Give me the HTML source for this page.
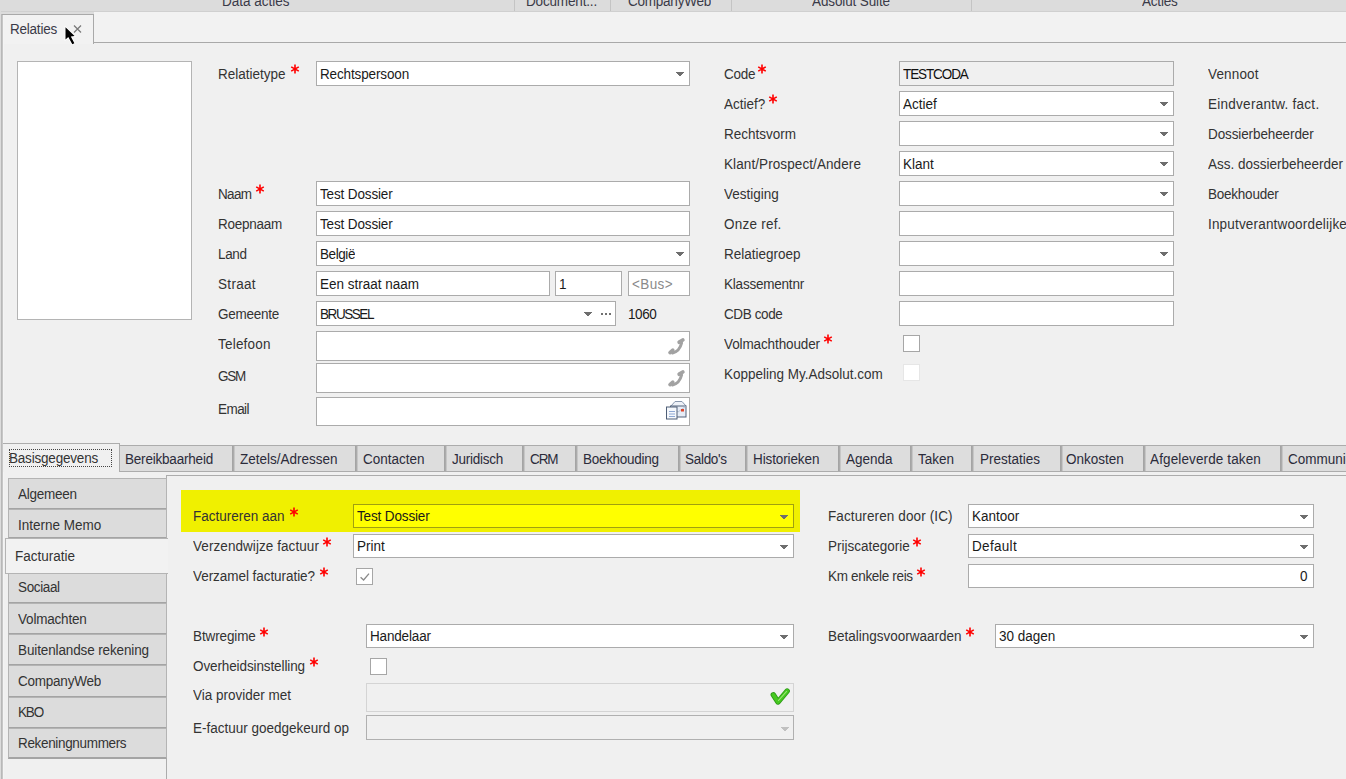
<!DOCTYPE html>
<html><head><meta charset="utf-8">
<style>
*{box-sizing:border-box}
html,body{margin:0;padding:0}
body{width:1346px;height:779px;overflow:hidden;position:relative;background:#f0f0f0;font-family:"Liberation Sans",sans-serif;font-size:13.5px;color:#333}
.a{position:absolute}
.t{position:absolute;white-space:nowrap;line-height:16px;height:16px;transform:scaleY(1.1);transform-origin:0 13px}
</style></head><body>
<div class="a" style="left:0px;top:0px;width:1346px;height:11px;background:#dcdcdc"></div>
<div class="a" style="left:0px;top:11px;width:1346px;height:1px;background:#d0d0d0"></div>
<div class="a" style="left:0px;top:12px;width:1346px;height:31px;background:#f2f2f2"></div>
<div class="a" style="left:0px;top:12px;width:94px;height:2px;background:#dcdcdc"></div>
<div class="a" style="left:0px;top:0px;width:1px;height:779px;background:#dcdcdc"></div>
<div class="a" style="left:514px;top:0px;width:1px;height:11px;background:#c4c4c4"></div>
<div class="a" style="left:610px;top:0px;width:1px;height:11px;background:#c4c4c4"></div>
<div class="a" style="left:731px;top:0px;width:1px;height:11px;background:#c4c4c4"></div>
<div class="a" style="left:971px;top:0px;width:1px;height:11px;background:#c4c4c4"></div>
<div class="t" style="left:222px;top:-6px;color:#3a3a48">Data acties</div>
<div class="t" style="left:526px;top:-6px;color:#3a3a48;letter-spacing:-0.162px">Document...</div>
<div class="t" style="left:628px;top:-6px;color:#3a3a48;letter-spacing:-0.230px">CompanyWeb</div>
<div class="t" style="left:812px;top:-6px;color:#3a3a48;letter-spacing:-0.120px">Adsolut Suite</div>
<div class="t" style="left:1142px;top:-6px;color:#3a3a48;letter-spacing:-0.194px">Acties</div>
<div class="a" style="left:92px;top:42px;width:1254px;height:1px;background:#a9a9a9"></div>
<div class="a" style="left:1px;top:14px;width:93px;height:30px;background:#f2f2f2;border:1px solid #a9a9a9;border-bottom:none;border-left:none"></div>
<div class="a" style="left:1px;top:14px;width:1px;height:765px;background:#b8b8b8"></div>
<div class="a" style="left:2px;top:15px;width:1px;height:764px;background:#c6c6c6"></div>
<div class="a" style="left:3px;top:15px;width:1px;height:764px;background:#f4f4f4"></div>
<div class="t" style="left:10px;top:22px;color:#3a3a48;letter-spacing:-0.223px">Relaties</div>
<svg class="a" style="left:70px;top:20px" width="16" height="16"><path d="M4 5.5L11 12.5M11 5.5L4 12.5" stroke="#7a7a7a" stroke-width="1.3"/></svg>
<svg class="a" style="left:60.5px;top:24px" width="20" height="24"><path d="M4.5 3.3V15.5L7.3 13L11.3 20.2L13.4 19.2L9.8 12.4L13.6 12.1Z" fill="#000" stroke="#fff" stroke-width="1.6" paint-order="stroke" stroke-linejoin="miter"/></svg>
<div class="a" style="left:17px;top:61px;width:175px;height:259px;background:#fff;border:1px solid #b4b4b4"></div>
<div class="t" style="left:218px;top:67px">Relatietype</div>
<svg class="a" style="left:290px;top:64px" width="10" height="10"><path d="M5 0.6V9.4M1.2 2.9L8.8 7.1M1.2 7.1L8.8 2.9" stroke="#f00" stroke-width="1.6"/></svg>
<div class="a" style="left:316px;top:61px;width:374px;height:25px;background:#fff;border:1px solid #ababab"></div>
<div class="t" style="left:320px;top:67px;color:#1a1a1a;letter-spacing:-0.139px">Rechtspersoon</div>
<svg class="a" style="left:676px;top:72px" width="8" height="4"><path d="M0 0H8V1H7V2H6V3H5V4H3V3H2V2H1V1H0Z" fill="#6e6e6e"/></svg>
<div class="t" style="left:218px;top:187px;letter-spacing:-0.679px">Naam</div>
<svg class="a" style="left:255px;top:184px" width="10" height="10"><path d="M5 0.6V9.4M1.2 2.9L8.8 7.1M1.2 7.1L8.8 2.9" stroke="#f00" stroke-width="1.6"/></svg>
<div class="a" style="left:316px;top:181px;width:374px;height:25px;background:#fff;border:1px solid #ababab"></div>
<div class="t" style="left:320px;top:187px;color:#1a1a1a;letter-spacing:-0.140px">Test Dossier</div>
<div class="t" style="left:218px;top:217px;letter-spacing:-0.268px">Roepnaam</div>
<div class="a" style="left:316px;top:211px;width:374px;height:25px;background:#fff;border:1px solid #ababab"></div>
<div class="t" style="left:320px;top:217px;color:#1a1a1a;letter-spacing:-0.140px">Test Dossier</div>
<div class="t" style="left:218px;top:247px;letter-spacing:-0.362px">Land</div>
<div class="a" style="left:316px;top:241px;width:374px;height:25px;background:#fff;border:1px solid #ababab"></div>
<div class="t" style="left:320px;top:247px;color:#1a1a1a;letter-spacing:-0.422px">België</div>
<svg class="a" style="left:676px;top:252px" width="8" height="4"><path d="M0 0H8V1H7V2H6V3H5V4H3V3H2V2H1V1H0Z" fill="#6e6e6e"/></svg>
<div class="t" style="left:218px;top:277px;letter-spacing:0.311px">Straat</div>
<div class="a" style="left:316px;top:271px;width:234px;height:25px;background:#fff;border:1px solid #ababab"></div>
<div class="t" style="left:320px;top:277px;color:#1a1a1a">Een straat naam</div>
<div class="a" style="left:555px;top:271px;width:67px;height:25px;background:#fff;border:1px solid #ababab"></div>
<div class="t" style="left:559px;top:277px;color:#1a1a1a">1</div>
<div class="a" style="left:628px;top:271px;width:62px;height:25px;background:#fff;border:1px solid #ababab"></div>
<div class="t" style="left:632px;top:277px;color:#8a8a8a;letter-spacing:0.374px">&lt;Bus&gt;</div>
<div class="t" style="left:218px;top:307px;letter-spacing:-0.268px">Gemeente</div>
<div class="a" style="left:316px;top:301px;width:300px;height:25px;background:#fff;border:1px solid #ababab"></div>
<div class="t" style="left:320px;top:307px;color:#1a1a1a;letter-spacing:-1.433px">BRUSSEL</div>
<svg class="a" style="left:584px;top:312px" width="8" height="4"><path d="M0 0H8V1H7V2H6V3H5V4H3V3H2V2H1V1H0Z" fill="#6e6e6e"/></svg>
<div class="a" style="left:601px;top:313px;width:2px;height:2px;background:#707070"></div>
<div class="a" style="left:605px;top:313px;width:2px;height:2px;background:#707070"></div>
<div class="a" style="left:609px;top:313px;width:2px;height:2px;background:#707070"></div>
<div class="t" style="left:628px;top:307px;color:#1a1a1a;letter-spacing:-0.387px">1060</div>
<div class="t" style="left:218px;top:337px;letter-spacing:0.207px">Telefoon</div>
<div class="a" style="left:316px;top:331px;width:374px;height:30px;background:#fff;border:1px solid #ababab"></div>
<div class="t" style="left:218px;top:369px;letter-spacing:-1.255px">GSM</div>
<div class="a" style="left:316px;top:363px;width:374px;height:30px;background:#fff;border:1px solid #ababab"></div>
<div class="t" style="left:218px;top:402px;letter-spacing:-0.553px">Email</div>
<div class="a" style="left:316px;top:397px;width:374px;height:29px;background:#fff;border:1px solid #ababab"></div>
<svg class="a" style="left:664px;top:334px" width="24" height="24"><g fill="none" stroke="#a2a2a2" stroke-linecap="round"><path d="M8.5 19Q15.5 17.5 17.6 9" stroke-width="3"/><path d="M6 18.6L8.8 16.2" stroke-width="3.6"/><path d="M15.2 8.2L18.8 6" stroke-width="3.8"/></g></svg>
<svg class="a" style="left:664px;top:366px" width="24" height="24"><g fill="none" stroke="#a2a2a2" stroke-linecap="round"><path d="M8.5 19Q15.5 17.5 17.6 9" stroke-width="3"/><path d="M6 18.6L8.8 16.2" stroke-width="3.6"/><path d="M15.2 8.2L18.8 6" stroke-width="3.8"/></g></svg>
<svg class="a" style="left:664px;top:399px" width="24" height="24">
<path d="M7 7L11 2.5H18L22 7" fill="#eef2f8" stroke="#8796ad" stroke-width="1"/>
<rect x="6.5" y="7" width="15.5" height="11" fill="#e6ecf6" stroke="#52627a" stroke-width="1"/>
<path d="M7 7.5L14 13L21.5 7.5" fill="none" stroke="#b8c4d6" stroke-width="1"/>
<rect x="17" y="10" width="3" height="2.5" fill="#e0452a"/>
<rect x="2.5" y="8" width="10.5" height="12" fill="#f5f8fc" stroke="#4e5e76" stroke-width="1"/>
<path d="M5 12.5H11M5 15H11M5 17.5H11" stroke="#8ea8d4" stroke-width="1"/>
</svg>
<div class="t" style="left:724px;top:67px;letter-spacing:-0.270px">Code</div>
<svg class="a" style="left:757px;top:64px" width="10" height="10"><path d="M5 0.6V9.4M1.2 2.9L8.8 7.1M1.2 7.1L8.8 2.9" stroke="#f00" stroke-width="1.6"/></svg>
<div class="a" style="left:899px;top:61px;width:275px;height:25px;background:#f0f0f0;border:1px solid #ababab"></div>
<div class="t" style="left:903px;top:67px;color:#111;letter-spacing:-1.102px">TESTCODA</div>
<div class="t" style="left:724px;top:97px">Actief?</div>
<svg class="a" style="left:767.5px;top:94px" width="10" height="10"><path d="M5 0.6V9.4M1.2 2.9L8.8 7.1M1.2 7.1L8.8 2.9" stroke="#f00" stroke-width="1.6"/></svg>
<div class="a" style="left:899px;top:91px;width:275px;height:25px;background:#fff;border:1px solid #ababab"></div>
<div class="t" style="left:903px;top:97px;color:#1a1a1a">Actief</div>
<svg class="a" style="left:1160px;top:102px" width="8" height="4"><path d="M0 0H8V1H7V2H6V3H5V4H3V3H2V2H1V1H0Z" fill="#6e6e6e"/></svg>
<div class="t" style="left:724px;top:127px">Rechtsvorm</div>
<div class="a" style="left:899px;top:121px;width:275px;height:25px;background:#fff;border:1px solid #ababab"></div>
<svg class="a" style="left:1160px;top:132px" width="8" height="4"><path d="M0 0H8V1H7V2H6V3H5V4H3V3H2V2H1V1H0Z" fill="#6e6e6e"/></svg>
<div class="t" style="left:724px;top:157px;letter-spacing:0.091px">Klant/Prospect/Andere</div>
<div class="a" style="left:899px;top:151px;width:275px;height:25px;background:#fff;border:1px solid #ababab"></div>
<div class="t" style="left:903px;top:157px;color:#1a1a1a">Klant</div>
<svg class="a" style="left:1160px;top:162px" width="8" height="4"><path d="M0 0H8V1H7V2H6V3H5V4H3V3H2V2H1V1H0Z" fill="#6e6e6e"/></svg>
<div class="t" style="left:724px;top:187px">Vestiging</div>
<div class="a" style="left:899px;top:181px;width:275px;height:25px;background:#fff;border:1px solid #ababab"></div>
<svg class="a" style="left:1160px;top:192px" width="8" height="4"><path d="M0 0H8V1H7V2H6V3H5V4H3V3H2V2H1V1H0Z" fill="#6e6e6e"/></svg>
<div class="t" style="left:724px;top:217px;letter-spacing:0.230px">Onze ref.</div>
<div class="a" style="left:899px;top:211px;width:275px;height:25px;background:#fff;border:1px solid #ababab"></div>
<div class="t" style="left:724px;top:247px">Relatiegroep</div>
<div class="a" style="left:899px;top:241px;width:275px;height:25px;background:#fff;border:1px solid #ababab"></div>
<svg class="a" style="left:1160px;top:252px" width="8" height="4"><path d="M0 0H8V1H7V2H6V3H5V4H3V3H2V2H1V1H0Z" fill="#6e6e6e"/></svg>
<div class="t" style="left:724px;top:277px;letter-spacing:-0.212px">Klassementnr</div>
<div class="a" style="left:899px;top:271px;width:275px;height:25px;background:#fff;border:1px solid #ababab"></div>
<div class="t" style="left:724px;top:307px;letter-spacing:-0.379px">CDB code</div>
<div class="a" style="left:899px;top:301px;width:275px;height:25px;background:#fff;border:1px solid #ababab"></div>
<div class="t" style="left:724px;top:337px;letter-spacing:-0.113px">Volmachthouder</div>
<svg class="a" style="left:823px;top:334px" width="10" height="10"><path d="M5 0.6V9.4M1.2 2.9L8.8 7.1M1.2 7.1L8.8 2.9" stroke="#f00" stroke-width="1.6"/></svg>
<div class="a" style="left:903px;top:335px;width:17px;height:17px;background:#fff;border:1px solid #a6a6a6"></div>
<div class="t" style="left:724px;top:367px">Koppeling My.Adsolut.com</div>
<div class="a" style="left:903px;top:364px;width:17px;height:17px;background:#ffffff;border:1px solid #e6e6e6"></div>
<div class="t" style="left:1208px;top:67px;letter-spacing:0.148px">Vennoot</div>
<div class="t" style="left:1208px;top:97px;letter-spacing:0.269px">Eindverantw. fact.</div>
<div class="t" style="left:1208px;top:127px;letter-spacing:-0.107px">Dossierbeheerder</div>
<div class="t" style="left:1208px;top:157px">Ass. dossierbeheerder</div>
<div class="t" style="left:1208px;top:187px;letter-spacing:-0.231px">Boekhouder</div>
<div class="t" style="left:1208px;top:217px;letter-spacing:0.178px">Inputverantwoordelijke</div>
<div class="a" style="left:120px;top:471px;width:1226px;height:1px;background:#acacac"></div>
<div class="a" style="left:119px;top:445px;width:1300px;height:27px;background:#dddddd;border:1px solid #acacac;border-left:none"></div>
<div class="t" style="left:125px;top:452px;color:#2b2b3a;letter-spacing:-0.201px">Bereikbaarheid</div>
<div class="a" style="left:232px;top:446px;width:1px;height:25px;background:#a4a4a4"></div>
<div class="a" style="left:233px;top:446px;width:1px;height:25px;background:#ababab"></div>
<div class="a" style="left:234px;top:446px;width:1px;height:25px;background:#c6c6c6"></div>
<div class="t" style="left:240px;top:452px;color:#2b2b3a">Zetels/Adressen</div>
<div class="a" style="left:355px;top:446px;width:1px;height:25px;background:#a4a4a4"></div>
<div class="a" style="left:356px;top:446px;width:1px;height:25px;background:#ababab"></div>
<div class="a" style="left:357px;top:446px;width:1px;height:25px;background:#c6c6c6"></div>
<div class="t" style="left:363px;top:452px;color:#2b2b3a">Contacten</div>
<div class="a" style="left:444px;top:446px;width:1px;height:25px;background:#a4a4a4"></div>
<div class="a" style="left:445px;top:446px;width:1px;height:25px;background:#ababab"></div>
<div class="a" style="left:446px;top:446px;width:1px;height:25px;background:#c6c6c6"></div>
<div class="t" style="left:452px;top:452px;color:#2b2b3a;letter-spacing:-0.253px">Juridisch</div>
<div class="a" style="left:522px;top:446px;width:1px;height:25px;background:#a4a4a4"></div>
<div class="a" style="left:523px;top:446px;width:1px;height:25px;background:#ababab"></div>
<div class="a" style="left:524px;top:446px;width:1px;height:25px;background:#c6c6c6"></div>
<div class="t" style="left:530px;top:452px;color:#2b2b3a;letter-spacing:-1.083px">CRM</div>
<div class="a" style="left:575px;top:446px;width:1px;height:25px;background:#a4a4a4"></div>
<div class="a" style="left:576px;top:446px;width:1px;height:25px;background:#ababab"></div>
<div class="a" style="left:577px;top:446px;width:1px;height:25px;background:#c6c6c6"></div>
<div class="t" style="left:583px;top:452px;color:#2b2b3a;letter-spacing:-0.293px">Boekhouding</div>
<div class="a" style="left:678px;top:446px;width:1px;height:25px;background:#a4a4a4"></div>
<div class="a" style="left:679px;top:446px;width:1px;height:25px;background:#ababab"></div>
<div class="a" style="left:680px;top:446px;width:1px;height:25px;background:#c6c6c6"></div>
<div class="t" style="left:685px;top:452px;color:#2b2b3a;letter-spacing:-0.294px">Saldo's</div>
<div class="a" style="left:745px;top:446px;width:1px;height:25px;background:#a4a4a4"></div>
<div class="a" style="left:746px;top:446px;width:1px;height:25px;background:#ababab"></div>
<div class="a" style="left:747px;top:446px;width:1px;height:25px;background:#c6c6c6"></div>
<div class="t" style="left:753px;top:452px;color:#2b2b3a;letter-spacing:-0.112px">Historieken</div>
<div class="a" style="left:838px;top:446px;width:1px;height:25px;background:#a4a4a4"></div>
<div class="a" style="left:839px;top:446px;width:1px;height:25px;background:#ababab"></div>
<div class="a" style="left:840px;top:446px;width:1px;height:25px;background:#c6c6c6"></div>
<div class="t" style="left:846px;top:452px;color:#2b2b3a">Agenda</div>
<div class="a" style="left:910px;top:446px;width:1px;height:25px;background:#a4a4a4"></div>
<div class="a" style="left:911px;top:446px;width:1px;height:25px;background:#ababab"></div>
<div class="a" style="left:912px;top:446px;width:1px;height:25px;background:#c6c6c6"></div>
<div class="t" style="left:918px;top:452px;color:#2b2b3a">Taken</div>
<div class="a" style="left:971px;top:446px;width:1px;height:25px;background:#a4a4a4"></div>
<div class="a" style="left:972px;top:446px;width:1px;height:25px;background:#ababab"></div>
<div class="a" style="left:973px;top:446px;width:1px;height:25px;background:#c6c6c6"></div>
<div class="t" style="left:980px;top:452px;color:#2b2b3a">Prestaties</div>
<div class="a" style="left:1060px;top:446px;width:1px;height:25px;background:#a4a4a4"></div>
<div class="a" style="left:1061px;top:446px;width:1px;height:25px;background:#ababab"></div>
<div class="a" style="left:1062px;top:446px;width:1px;height:25px;background:#c6c6c6"></div>
<div class="t" style="left:1066px;top:452px;color:#2b2b3a">Onkosten</div>
<div class="a" style="left:1143px;top:446px;width:1px;height:25px;background:#a4a4a4"></div>
<div class="a" style="left:1144px;top:446px;width:1px;height:25px;background:#ababab"></div>
<div class="a" style="left:1145px;top:446px;width:1px;height:25px;background:#c6c6c6"></div>
<div class="t" style="left:1150px;top:452px;color:#2b2b3a;letter-spacing:0.128px">Afgeleverde taken</div>
<div class="a" style="left:1280px;top:446px;width:1px;height:25px;background:#a4a4a4"></div>
<div class="a" style="left:1281px;top:446px;width:1px;height:25px;background:#ababab"></div>
<div class="a" style="left:1282px;top:446px;width:1px;height:25px;background:#c6c6c6"></div>
<div class="t" style="left:1288px;top:452px;color:#2b2b3a">Communicatie</div>
<div class="a" style="left:3px;top:443px;width:117px;height:29px;background:#f0f0f0;border:1px solid #acacac;border-bottom:none;border-left:none"></div>
<div class="a" style="left:9px;top:449px;width:103px;height:18px;border:1px dotted #444"></div>
<div class="t" style="left:9px;top:451px;letter-spacing:-0.197px">Basisgegevens</div>
<div class="a" style="left:166px;top:475px;width:1180px;height:304px;background:#f0f0f0;border-top:1px solid #acacac;border-left:1px solid #acacac"></div>
<div class="a" style="left:8px;top:478px;width:159px;height:32px;background:#dcdcdc;border:1px solid #b4b4b4;border-bottom:2px solid #a4a4a4"></div>
<div class="a" style="left:8px;top:509px;width:159px;height:30px;background:#dcdcdc;border:1px solid #b4b4b4;border-bottom:2px solid #a4a4a4"></div>
<div class="a" style="left:8px;top:573px;width:159px;height:31px;background:#dcdcdc;border:1px solid #b4b4b4;border-bottom:2px solid #a4a4a4"></div>
<div class="a" style="left:8px;top:603px;width:159px;height:32px;background:#dcdcdc;border:1px solid #b4b4b4;border-bottom:2px solid #a4a4a4"></div>
<div class="a" style="left:8px;top:634px;width:159px;height:32px;background:#dcdcdc;border:1px solid #b4b4b4;border-bottom:2px solid #a4a4a4"></div>
<div class="a" style="left:8px;top:665px;width:159px;height:33px;background:#dcdcdc;border:1px solid #b4b4b4;border-bottom:2px solid #a4a4a4"></div>
<div class="a" style="left:8px;top:697px;width:159px;height:32px;background:#dcdcdc;border:1px solid #b4b4b4;border-bottom:2px solid #a4a4a4"></div>
<div class="a" style="left:8px;top:728px;width:159px;height:31px;background:#dcdcdc;border:1px solid #b4b4b4;border-bottom:2px solid #a4a4a4"></div>
<div class="t" style="left:18px;top:487px;letter-spacing:-0.262px">Algemeen</div>
<div class="t" style="left:18px;top:518px">Interne Memo</div>
<div class="t" style="left:18px;top:580px;letter-spacing:-0.369px">Sociaal</div>
<div class="t" style="left:18px;top:612px;letter-spacing:-0.195px">Volmachten</div>
<div class="t" style="left:18px;top:643px;letter-spacing:-0.124px">Buitenlandse rekening</div>
<div class="t" style="left:18px;top:674px;letter-spacing:-0.230px">CompanyWeb</div>
<div class="t" style="left:18px;top:705px;letter-spacing:-1.172px">KBO</div>
<div class="t" style="left:18px;top:736px;letter-spacing:-0.334px">Rekeningnummers</div>
<div class="a" style="left:5px;top:538px;width:163px;height:36px;background:#f2f2f2;border:1px solid #b4b4b4;border-right:none"></div>
<div class="t" style="left:15px;top:549px">Facturatie</div>
<div class="a" style="left:181px;top:490px;width:619px;height:42px;background:#f0f000"></div>
<div class="t" style="left:193px;top:509px">Factureren aan</div>
<svg class="a" style="left:289px;top:506.5px" width="10" height="10"><path d="M5 0.6V9.4M1.2 2.9L8.8 7.1M1.2 7.1L8.8 2.9" stroke="#f00" stroke-width="1.6"/></svg>
<div class="a" style="left:353px;top:504px;width:441px;height:24px;background:#ffff00;border:1px solid #a0a010"></div>
<div class="t" style="left:357px;top:509px;color:#1a1a1a;letter-spacing:-0.140px">Test Dossier</div>
<svg class="a" style="left:780px;top:515px" width="8" height="4"><path d="M0 0H8V1H7V2H6V3H5V4H3V3H2V2H1V1H0Z" fill="#6e6e6e"/></svg>
<div class="t" style="left:193px;top:539px;letter-spacing:0.071px">Verzendwijze factuur</div>
<svg class="a" style="left:322px;top:536.5px" width="10" height="10"><path d="M5 0.6V9.4M1.2 2.9L8.8 7.1M1.2 7.1L8.8 2.9" stroke="#f00" stroke-width="1.6"/></svg>
<div class="a" style="left:353px;top:534px;width:441px;height:24px;background:#fff;border:1px solid #ababab"></div>
<div class="t" style="left:357px;top:539px;color:#1a1a1a">Print</div>
<svg class="a" style="left:780px;top:545px" width="8" height="4"><path d="M0 0H8V1H7V2H6V3H5V4H3V3H2V2H1V1H0Z" fill="#6e6e6e"/></svg>
<div class="t" style="left:193px;top:569px;letter-spacing:-0.053px">Verzamel facturatie?</div>
<svg class="a" style="left:318.5px;top:566.5px" width="10" height="10"><path d="M5 0.6V9.4M1.2 2.9L8.8 7.1M1.2 7.1L8.8 2.9" stroke="#f00" stroke-width="1.6"/></svg>
<div class="a" style="left:356px;top:568px;width:17px;height:17px;background:#fff;border:1px solid #a6a6a6"></div>
<svg class="a" style="left:356px;top:568px" width="17" height="17"><path d="M4.6 9.3L7.6 12L13 5.6" fill="none" stroke="#8a8a8a" stroke-width="1.3"/></svg>
<div class="t" style="left:193px;top:629px;letter-spacing:-0.120px">Btwregime</div>
<svg class="a" style="left:258.5px;top:626.5px" width="10" height="10"><path d="M5 0.6V9.4M1.2 2.9L8.8 7.1M1.2 7.1L8.8 2.9" stroke="#f00" stroke-width="1.6"/></svg>
<div class="a" style="left:366px;top:624px;width:428px;height:24px;background:#fff;border:1px solid #ababab"></div>
<div class="t" style="left:370px;top:629px;color:#1a1a1a;letter-spacing:-0.166px">Handelaar</div>
<svg class="a" style="left:780px;top:635px" width="8" height="4"><path d="M0 0H8V1H7V2H6V3H5V4H3V3H2V2H1V1H0Z" fill="#6e6e6e"/></svg>
<div class="t" style="left:193px;top:659px;letter-spacing:-0.109px">Overheidsinstelling</div>
<svg class="a" style="left:309px;top:656.5px" width="10" height="10"><path d="M5 0.6V9.4M1.2 2.9L8.8 7.1M1.2 7.1L8.8 2.9" stroke="#f00" stroke-width="1.6"/></svg>
<div class="a" style="left:370px;top:658px;width:17px;height:17px;background:#fff;border:1px solid #a6a6a6"></div>
<div class="t" style="left:193px;top:688px">Via provider met</div>
<div class="a" style="left:366px;top:683px;width:428px;height:29px;background:#f0f0f0;border:1px solid #d4d4d4"></div>
<svg class="a" style="left:766px;top:684px" width="26" height="26"><path d="M7.3 10.8L12 18L21.2 7" fill="none" stroke="#2e9a18" stroke-width="5.4" stroke-linecap="round" stroke-linejoin="round"/><path d="M7.3 10.8L12 18L21.2 7" fill="none" stroke="#46c820" stroke-width="3.6" stroke-linecap="round" stroke-linejoin="round"/><path d="M12.5 16.5L20.5 7.5" stroke="#9ee878" stroke-width="1.1" stroke-linecap="round"/></svg>
<div class="t" style="left:193px;top:721px">E-factuur goedgekeurd op</div>
<div class="a" style="left:366px;top:715px;width:428px;height:25px;background:#f0f0f0;border:1px solid #b0b0b0"></div>
<svg class="a" style="left:781px;top:727px" width="8" height="4"><path d="M0 0H8V1H7V2H6V3H5V4H3V3H2V2H1V1H0Z" fill="#c0c0c0"/></svg>
<div class="t" style="left:828px;top:509px;letter-spacing:0.120px">Factureren door (IC)</div>
<div class="a" style="left:968px;top:504px;width:346px;height:24px;background:#fff;border:1px solid #ababab"></div>
<div class="t" style="left:972px;top:509px;color:#1a1a1a">Kantoor</div>
<svg class="a" style="left:1300px;top:515px" width="8" height="4"><path d="M0 0H8V1H7V2H6V3H5V4H3V3H2V2H1V1H0Z" fill="#6e6e6e"/></svg>
<div class="t" style="left:828px;top:539px">Prijscategorie</div>
<svg class="a" style="left:912px;top:536.5px" width="10" height="10"><path d="M5 0.6V9.4M1.2 2.9L8.8 7.1M1.2 7.1L8.8 2.9" stroke="#f00" stroke-width="1.6"/></svg>
<div class="a" style="left:968px;top:534px;width:346px;height:24px;background:#fff;border:1px solid #ababab"></div>
<div class="t" style="left:972px;top:539px;color:#1a1a1a;letter-spacing:0.317px">Default</div>
<svg class="a" style="left:1300px;top:545px" width="8" height="4"><path d="M0 0H8V1H7V2H6V3H5V4H3V3H2V2H1V1H0Z" fill="#6e6e6e"/></svg>
<div class="t" style="left:828px;top:569px;letter-spacing:-0.321px">Km enkele reis</div>
<svg class="a" style="left:916px;top:566.5px" width="10" height="10"><path d="M5 0.6V9.4M1.2 2.9L8.8 7.1M1.2 7.1L8.8 2.9" stroke="#f00" stroke-width="1.6"/></svg>
<div class="a" style="left:968px;top:564px;width:346px;height:24px;background:#fff;border:1px solid #ababab"></div>
<div class="t" style="left:1300px;top:569px;color:#1a1a1a">0</div>
<div class="t" style="left:828px;top:629px">Betalingsvoorwaarden</div>
<svg class="a" style="left:965px;top:626.5px" width="10" height="10"><path d="M5 0.6V9.4M1.2 2.9L8.8 7.1M1.2 7.1L8.8 2.9" stroke="#f00" stroke-width="1.6"/></svg>
<div class="a" style="left:995px;top:624px;width:319px;height:24px;background:#fff;border:1px solid #ababab"></div>
<div class="t" style="left:999px;top:629px;color:#1a1a1a">30 dagen</div>
<svg class="a" style="left:1300px;top:635px" width="8" height="4"><path d="M0 0H8V1H7V2H6V3H5V4H3V3H2V2H1V1H0Z" fill="#6e6e6e"/></svg>
</body></html>
